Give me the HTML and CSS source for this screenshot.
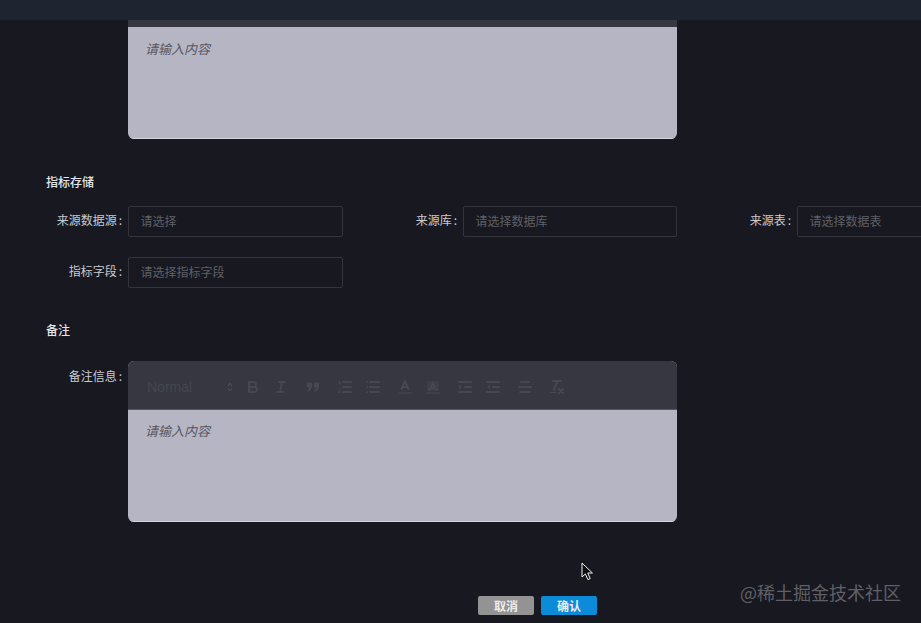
FILE: index.html
```html
<!DOCTYPE html>
<html lang="zh-CN">
<head>
<meta charset="utf-8">
<title>指标</title>
<link rel="stylesheet" href="styles.css">
</head>
<body>
<svg class="defs" width="0" height="0" aria-hidden="true">
  <symbol id="i-bold" viewBox="0 0 18 18"><path class="st" d="M5 4H9.5A2.5 2.5 0 0 1 12 6.5A2.5 2.5 0 0 1 9.5 9H5V4Z"/><path class="st" d="M5 9H10.5A2.5 2.5 0 0 1 13 11.5A2.5 2.5 0 0 1 10.5 14H5V9Z"/></symbol>
  <symbol id="i-italic" viewBox="0 0 18 18"><path class="st" d="M7 4H13M5 14H11M8 14L10 4"/></symbol>
  <symbol id="i-quote" viewBox="0 0 18 18"><path class="fl" d="M3 4.5H8V8.5C8 11 6.4 13 3.6 14L3 12.8C4.4 12 5 11 5 9.5H3ZM10 4.5H15V8.5C15 11 13.4 13 10.6 14L10 12.8C11.4 12 12 11 12 9.5H10Z"/></symbol>
  <symbol id="i-ol" viewBox="0 0 18 18"><path class="st" d="M7 4H15M7 9H15M7 14H15"/><path class="thin" d="M2.5 3.5L3.5 3V6M2.5 6H4.5M2.5 11.5C2.5 10.5 4.5 10.5 4.5 11.5C4.5 12.5 2.5 13 2.5 14.5H4.5"/></symbol>
  <symbol id="i-ul" viewBox="0 0 18 18"><path class="st" d="M6 4H15M6 9H15M6 14H15M3 4H3.01M3 9H3.01M3 14H3.01"/></symbol>
  <symbol id="i-color" viewBox="0 0 18 18"><path class="st" d="M5.5 11L9 3L12.5 11M11.63 9H6.38"/><path class="st faint-line" d="M3 15H15"/></symbol>
  <symbol id="i-bg" viewBox="0 0 18 18"><rect class="fl faint" x="3" y="3" width="12" height="10" rx="1"/><path class="st" d="M5.5 12L9 5L12.5 12M11.2 10H6.8"/><path class="st faint-line" d="M3 15H15"/></symbol>
  <symbol id="i-indent" viewBox="0 0 18 18"><path class="st" d="M3 14H15M3 4H15M9 9H15"/><path class="fl" d="M3 7L6 9L3 11Z"/></symbol>
  <symbol id="i-outdent" viewBox="0 0 18 18"><path class="st" d="M3 14H15M3 4H15M9 9H15"/><path class="fl" d="M6 7L3 9L6 11Z"/></symbol>
  <symbol id="i-align" viewBox="0 0 18 18"><path class="st" d="M3 9H15M4 14H14M5 4H13"/></symbol>
  <symbol id="i-clean" viewBox="0 0 18 18"><path class="st" d="M5 3H13M6 12L9.35 3M11 11L15 15M15 11L11 15"/><rect class="fl" x="2" y="14" width="7" height="1"/></symbol>
</svg>

<header class="topbar"></header>

<main class="content">
  <div class="editor editor-offset">
    <div class="toolbar toolbar-scrolled"></div>
    <div class="editor-body">请输入内容</div>
  </div>

  <h2 class="section-title section-first">指标存储</h2>
  <div class="field-grid">
    <div class="field"><span class="label">来源数据源<i class="colon">:</i></span><div class="input">请选择</div></div>
    <div class="field"><span class="label">来源库<i class="colon">:</i></span><div class="input">请选择数据库</div></div>
    <div class="field"><span class="label">来源表<i class="colon">:</i></span><div class="input">请选择数据表</div></div>
    <div class="field"><span class="label">指标字段<i class="colon">:</i></span><div class="input">请选择指标字段</div></div>
  </div>

  <h2 class="section-title section-second">备注</h2>
  <div class="field note-field">
    <span class="label">备注信息<i class="colon">:</i></span>
    <div class="editor">
      <div class="toolbar">
        <span class="picker">Normal<svg class="picker-arrows" viewBox="0 0 6 12"><path d="M1 4.5L3 2.5L5 4.5M1 7.5L3 9.5L5 7.5"/></svg></span>
        <div class="tool-group">
          <svg class="tool"><use href="#i-bold"/></svg>
          <svg class="tool"><use href="#i-italic"/></svg>
        </div>
        <div class="tool-group">
          <svg class="tool"><use href="#i-quote"/></svg>
        </div>
        <div class="tool-group">
          <svg class="tool"><use href="#i-ol"/></svg>
          <svg class="tool"><use href="#i-ul"/></svg>
        </div>
        <div class="tool-group">
          <svg class="tool"><use href="#i-color"/></svg>
          <svg class="tool"><use href="#i-bg"/></svg>
        </div>
        <div class="tool-group">
          <svg class="tool"><use href="#i-indent"/></svg>
          <svg class="tool"><use href="#i-outdent"/></svg>
        </div>
        <div class="tool-group">
          <svg class="tool"><use href="#i-align"/></svg>
        </div>
        <div class="tool-group">
          <svg class="tool"><use href="#i-clean"/></svg>
        </div>
      </div>
      <div class="editor-body note-body">请输入内容</div>
    </div>
  </div>

  <div class="actions">
    <button class="btn btn-cancel" type="button">取消</button>
    <button class="btn btn-ok" type="button">确认</button>
  </div>
</main>

<svg class="cursor" viewBox="0 0 13 19" aria-hidden="true"><path d="M1 1V15L4.4 11.9L6.9 17.6L9.2 16.6L6.8 11H11.4Z"/></svg>
<div class="watermark">@稀土掘金技术社区</div>
</body>
</html>
```

FILE: styles.css
```css
* { box-sizing: border-box; }

html, body {
  margin: 0;
  height: 623px;
  overflow: hidden;
}

body {
  position: relative;
  background: #171820;
  font-family: "Noto Sans CJK SC", "Noto Sans", sans-serif;
  font-size: 12px;
  color: #c9cacf;
}

.defs { position: absolute; }

.topbar {
  height: 20px;
  background: #1f2431;
}

.content {
  width: 921px;
  height: 603px;
  padding-left: 46px;
  overflow: hidden;
}

.editor {
  width: 549px;
  flex: none;
  border-radius: 6px;
  overflow: hidden;
  background: #b6b5c3;
}

.editor-offset {
  margin-left: 82px;
  border-radius: 0 0 6px 6px;
}

.toolbar {
  height: 49px;
  padding: 4px 0 0 19px;
  display: flex;
  align-items: center;
  background: #363740;
  border-bottom: 1px solid #55565e;
}

.toolbar-scrolled {
  height: 7px;
  padding: 0;
  border-bottom: 0;
}

.picker {
  width: 92px;
  flex: none;
  display: flex;
  align-items: center;
  justify-content: space-between;
  padding-right: 6px;
  font-family: "Liberation Sans", sans-serif;
  font-size: 14px;
  font-weight: 500;
  color: #45464f;
}

.picker-arrows {
  width: 6px;
  height: 12px;
  fill: none;
  stroke: #4b4c55;
  stroke-width: 1.2;
}

.tool-group {
  display: flex;
  margin-right: 4px;
}

.tool {
  width: 28px;
  height: 24px;
  padding: 3px 5px;
}

.st {
  fill: none;
  stroke: #464750;
  stroke-width: 2;
  stroke-linecap: round;
  stroke-linejoin: round;
}

.st.faint-line { stroke: #3f4049; }

.thin {
  fill: none;
  stroke: #464750;
  stroke-width: 1;
}

.fl { fill: #464750; }
.fl.faint { fill: #3d3e47; }

.editor-body {
  height: 112px;
  padding: 13px 17px;
  font-style: italic;
  font-size: 13px;
  line-height: 18px;
  color: #575762;
  border-bottom: 1px solid #d5d5dc;
}

.note-body {
  padding-top: 12px;
}

.section-title {
  margin: 0;
  font-size: 12px;
  font-weight: 500;
  line-height: 20px;
  color: #e6e6ea;
}

.section-first { margin-top: 33px; }
.section-second { margin-top: 32px; }

.field-grid {
  margin-top: 14px;
  display: grid;
  grid-template-columns: 297px 296px 297px;
  column-gap: 38px;
  row-gap: 20px;
}

.field {
  display: flex;
  align-items: flex-start;
}

.label {
  width: 82px;
  flex: none;
  line-height: 28px;
  text-align: right;
  white-space: nowrap;
  color: #c9cacf;
}

.colon {
  font-style: normal;
  margin: 0 6px 0 2px;
}

.input {
  flex: 1;
  height: 31px;
  padding: 0 11px 2px 11.5px;
  line-height: 27px;
  border: 1px solid #34353c;
  border-radius: 2px;
  color: #5f6066;
  white-space: nowrap;
  overflow: hidden;
}

.note-field {
  margin-top: 21px;
}

.note-field .label {
  line-height: 30px;
}

.actions {
  margin: 74px 0 0 432px;
  display: flex;
  gap: 7px;
}

.btn {
  width: 56px;
  height: 19px;
  padding: 0;
  border: 0;
  border-radius: 2px;
  font: 700 12px/19px "Noto Sans CJK SC", sans-serif;
  color: #ececec;
}

.btn-cancel { background: #939394; }
.btn-ok { background: #0c8bd8; }

.cursor {
  position: absolute;
  left: 581px;
  top: 562px;
  width: 13px;
  height: 19px;
  fill: #0e0e12;
  stroke: #f2f2f2;
  stroke-width: 1;
}

.watermark {
  position: absolute;
  left: 740px;
  top: 579px;
  font-size: 18px;
  line-height: 26px;
  white-space: nowrap;
  color: #5f6066;
}
```
